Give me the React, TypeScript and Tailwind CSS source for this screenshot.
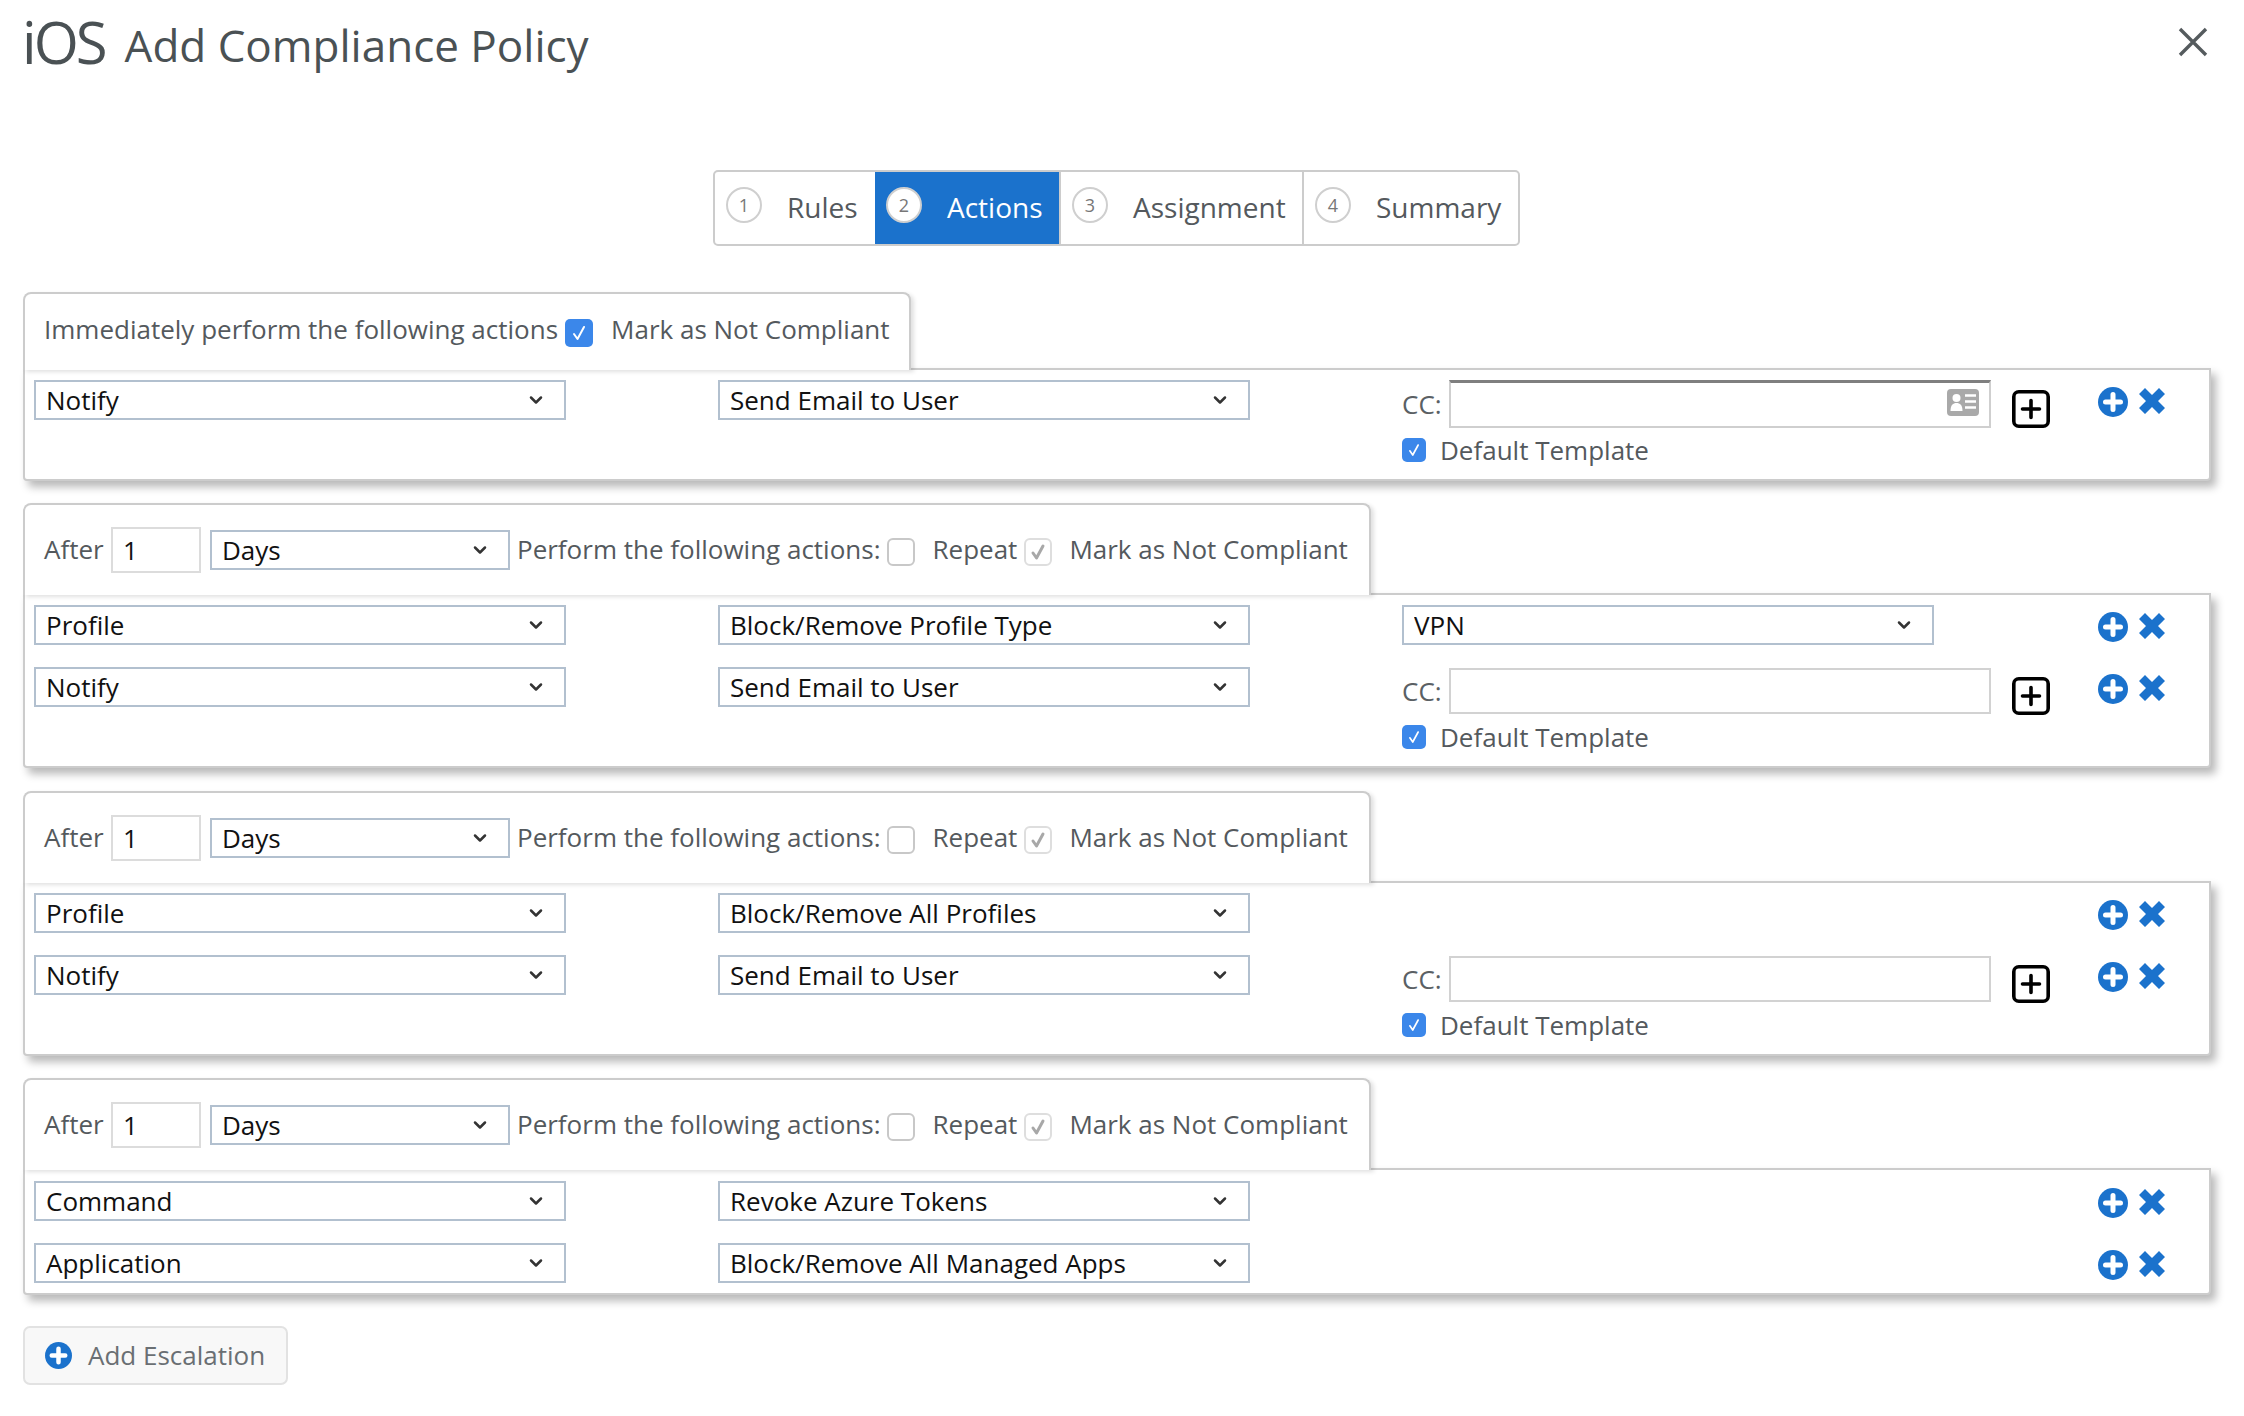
import { ChevronDown } from 'lucide-react';

const steps = [
  { n: 1, label: 'Rules', width: 'w-[160px]' },
  { n: 2, label: 'Actions', width: 'w-[184px]', active: true },
  { n: 3, label: 'Assignment', width: 'w-[243px]' },
  { n: 4, label: 'Summary', width: 'w-[216px]' },
];

function Check({ className, weight = 2 }: { className: string; weight?: number }) {
  return (
    <svg viewBox="0 0 24 24" className={className} fill="none" stroke="currentColor" strokeWidth={weight} strokeLinecap="round" strokeLinejoin="round">
      <path d="M7 13l3.5 5L17 6" />
    </svg>
  );
}

function BlueCheck({ size }: { size: 'sm' | 'lg' }) {
  return (
    <span className={`flex shrink-0 items-center justify-center rounded-[5px] bg-[#3b87ea] text-white ${size === 'lg' ? 'h-[28px] w-[28px]' : 'h-[24px] w-[24px]'}`}>
      <Check className={size === 'lg' ? 'h-[24px] w-[24px]' : 'h-[20px] w-[20px]'} />
    </span>
  );
}

function PlusCircle({ size }: { size: number }) {
  return (
    <svg viewBox="0 0 30 30" width={size} height={size} className="shrink-0">
      <circle cx="15" cy="15" r="15" fill="#1b72cc" />
      <path d="M15 7.5v15M7.5 15h15" stroke="#fff" strokeWidth="5" strokeLinecap="round" />
    </svg>
  );
}

function Select({ value, width = 'w-[532px]' }: { value: string; width?: string }) {
  return (
    <div className={`relative h-[40px] shrink-0 ${width}`}>
      <select
        defaultValue={value}
        className="h-full w-full appearance-none border-2 border-[#b2c0cf] bg-white pb-[1px] pl-[10px] text-[26px] leading-[36px] text-[#111] outline-none"
      >
        <option>{value}</option>
      </select>
      <ChevronDown size={20} strokeWidth={3} className="pointer-events-none absolute right-[20px] top-[10px] text-[#333]" />
    </div>
  );
}

function RowActions() {
  return (
    <div className="flex items-start pt-[7px]">
      <PlusCircle size={30} />
      <svg viewBox="0 0 26 26" className="ml-[11px] mt-[1px] h-[26px] w-[26px] shrink-0 fill-[#1b72cc]">
        <path d="M6 0l7 7 7-7 6 6-7 7 7 7-6 6-7-7-7 7-6-6 7-7-7-7z" />
      </svg>
    </div>
  );
}

function PlusBox() {
  return (
    <svg viewBox="0 0 38 38" className="mt-[10px] h-[38px] w-[38px] shrink-0 text-black" fill="none" stroke="currentColor" strokeWidth="3.6" strokeLinecap="round">
      <rect x="1.8" y="1.8" width="34.4" height="34.4" rx="5" />
      <path d="M10.5 19h17M19 10.5v17" />
    </svg>
  );
}

function ContactCard() {
  return (
    <svg viewBox="0 0 32 27" className="absolute right-[12px] top-[9px] h-[27px] w-[32px]">
      <rect width="32" height="27" rx="4" fill="#a9a9a9" />
      <circle cx="9.5" cy="9" r="4" fill="#fff" />
      <path d="M3.5 22c0-6 2.5-8 6-8s6 2 6 8z" fill="#fff" />
      <path d="M18 6.5h11M18 12.5h11M18 18.5h11" stroke="#fff" strokeWidth="2.6" />
    </svg>
  );
}

function CcField({ focused }: { focused?: boolean }) {
  return (
    <div>
      <div className="flex h-[56px] items-start">
        <span className="w-[47px] shrink-0 pt-[6px] text-[26px] leading-[36px] text-[#5a6064]">CC:</span>
        <div className={`relative ${focused ? '' : 'mt-[1px]'}`}>
          <input
            className={`block w-[542px] bg-white outline-none ${focused ? 'h-[48px] border-2 border-[#cfcfcf] border-t-[3px] border-t-[#7f7f7f]' : 'h-[46px] border-2 border-[#d2d2d2]'}`}
          />
          {focused && <ContactCard />}
        </div>
        <span className="ml-[21px]">
          <PlusBox />
        </span>
      </div>
      <div className="flex items-center gap-[14px]">
        <BlueCheck size="sm" />
        <span className="text-[26px] leading-[28px] text-[#54595d]">Default Template</span>
      </div>
    </div>
  );
}

type Row = { kind: string; action: string; third?: 'vpn' | 'cc' | 'cc-focused' };

function ActionRow({ row }: { row: Row }) {
  return (
    <div className="flex h-[62px]">
      <div className="w-[684px] shrink-0">
        <Select value={row.kind} />
      </div>
      <div className="w-[684px] shrink-0">
        <Select value={row.action} />
      </div>
      <div className="w-[696px] shrink-0">
        {row.third === 'vpn' && <Select value="VPN" />}
        {(row.third === 'cc' || row.third === 'cc-focused') && <CcField focused={row.third === 'cc-focused'} />}
      </div>
      <RowActions />
    </div>
  );
}

function AfterHeader() {
  return (
    <div className="flex h-[90px] items-center pb-[1px] pl-[19px] pr-[21px] text-[26px] text-[#54595d]">
      <span className="w-[67px] shrink-0">After</span>
      <input defaultValue="1" className="h-[46px] w-[90px] border-2 border-[#dcdcdc] pl-[10px] text-[#111] outline-none" />
      <span className="ml-[9px]">
        <Select value="Days" width="w-[300px]" />
      </span>
      <span className="ml-[7px] whitespace-nowrap">Perform the following actions:</span>
      <span className="ml-[6px] mt-[5px] h-[28px] w-[28px] shrink-0 rounded-[6px] border-2 border-[#c8c8c8] bg-white" />
      <span className="ml-[18px]">Repeat</span>
      <span className="ml-[7px] mt-[5px] flex h-[28px] w-[28px] shrink-0 items-center justify-center rounded-[6px] border-2 border-[#dedede] text-[#a8a8a8]">
        <Check className="h-[24px] w-[24px]" weight={3} />
      </span>
      <span className="ml-[17px] whitespace-nowrap">Mark as Not Compliant</span>
    </div>
  );
}

function ImmediateHeader() {
  return (
    <div className="flex h-[76px] items-center pb-[6px] pl-[19px] pr-[19px] text-[26px] text-[#54595d]">
      <span className="whitespace-nowrap">Immediately perform the following actions</span>
      <span className="ml-[7px] mt-[7px]">
        <BlueCheck size="lg" />
      </span>
      <span className="ml-[18px] whitespace-nowrap">Mark as Not Compliant</span>
    </div>
  );
}

function Panel({ header, rows, bodyClass, gap }: { header: React.ReactNode; rows: Row[]; bodyClass: string; gap: string }) {
  return (
    <div className={gap}>
      <div className="relative z-10 -mb-[2px] w-fit rounded-t-[8px] border-2 border-b-0 border-[#cccccc] bg-white shadow-[3px_2px_4px_rgba(0,0,0,0.12)]">
        {header}
      </div>
      <div className={`rounded-b-[4px] border-2 border-[#cccccc] bg-white pl-[9px] shadow-[5px_6px_8px_rgba(0,0,0,0.28)] ${bodyClass}`}>
        {rows.map((row, i) => (
          <ActionRow key={i} row={row} />
        ))}
      </div>
    </div>
  );
}

export default function App() {
  return (
    <div className="relative h-[1416px] w-[2244px] overflow-hidden bg-white font-['Open_Sans',sans-serif]">
      {/* Title */}
      <div className="flex h-[170px] items-start justify-between pl-[22px] pr-[36px]">
        <div className="flex items-start text-[#4a5154]">
          <span className="pt-[4px] text-[58px] leading-[76px] tracking-[-3px]">iOS</span>
          <span className="ml-[20px] pt-[7px] text-[44px] leading-[76px]">Add Compliance Policy</span>
        </div>
        <svg viewBox="0 0 30 30" className="mt-[27px] h-[30px] w-[30px] text-[#555b5e]" fill="none" stroke="currentColor" strokeWidth="3.4">
          <path d="M2 2l26 26M28 2L2 28" />
        </svg>
      </div>

      {/* Stepper */}
      <div className="ml-[713px] flex h-[76px] w-fit rounded-[5px] border-2 border-[#cccccc]">
        {steps.map((s, i) => (
          <div
            key={s.n}
            className={`flex items-center gap-[25px] pl-[11px] ${s.width} ${s.active ? 'bg-[#1b72cc] text-white' : 'text-[#54595d]'} ${i > 1 ? 'border-l-2 border-[#cccccc]' : ''}`}
          >
            <span className="mb-[6px] flex h-[36px] w-[36px] shrink-0 items-center justify-center rounded-full border-2 border-[#cfcfcf] bg-white text-[18px] text-[#777]">
              {s.n}
            </span>
            <span className="pb-[2px] text-[28px] leading-none">{s.label}</span>
          </div>
        ))}
      </div>

      {/* Policy blocks */}
      <div className="ml-[23px] mt-[46px] w-[2188px]">
        <Panel
          gap="mb-[22px]"
          header={<ImmediateHeader />}
          bodyClass="h-[113px] pt-[10px]"
          rows={[{ kind: 'Notify', action: 'Send Email to User', third: 'cc-focused' }]}
        />
        <Panel
          gap="mb-[23px]"
          header={<AfterHeader />}
          bodyClass="h-[175px] pt-[10px]"
          rows={[
            { kind: 'Profile', action: 'Block/Remove Profile Type', third: 'vpn' },
            { kind: 'Notify', action: 'Send Email to User', third: 'cc' },
          ]}
        />
        <Panel
          gap="mb-[22px]"
          header={<AfterHeader />}
          bodyClass="h-[175px] pt-[10px]"
          rows={[
            { kind: 'Profile', action: 'Block/Remove All Profiles' },
            { kind: 'Notify', action: 'Send Email to User', third: 'cc' },
          ]}
        />
        <Panel
          gap="mb-[31px]"
          header={<AfterHeader />}
          bodyClass="h-[127px] pt-[11px]"
          rows={[
            { kind: 'Command', action: 'Revoke Azure Tokens' },
            { kind: 'Application', action: 'Block/Remove All Managed Apps' },
          ]}
        />
        <button className="flex h-[59px] w-[265px] items-center gap-[16px] rounded-[7px] border-2 border-[#e2e2e2] bg-[#f8f8f8] pb-[1px] pl-[20px] text-[26px] font-medium text-[#6a6f73]">
          <PlusCircle size={27} />
          Add Escalation
        </button>
      </div>
    </div>
  );
}
